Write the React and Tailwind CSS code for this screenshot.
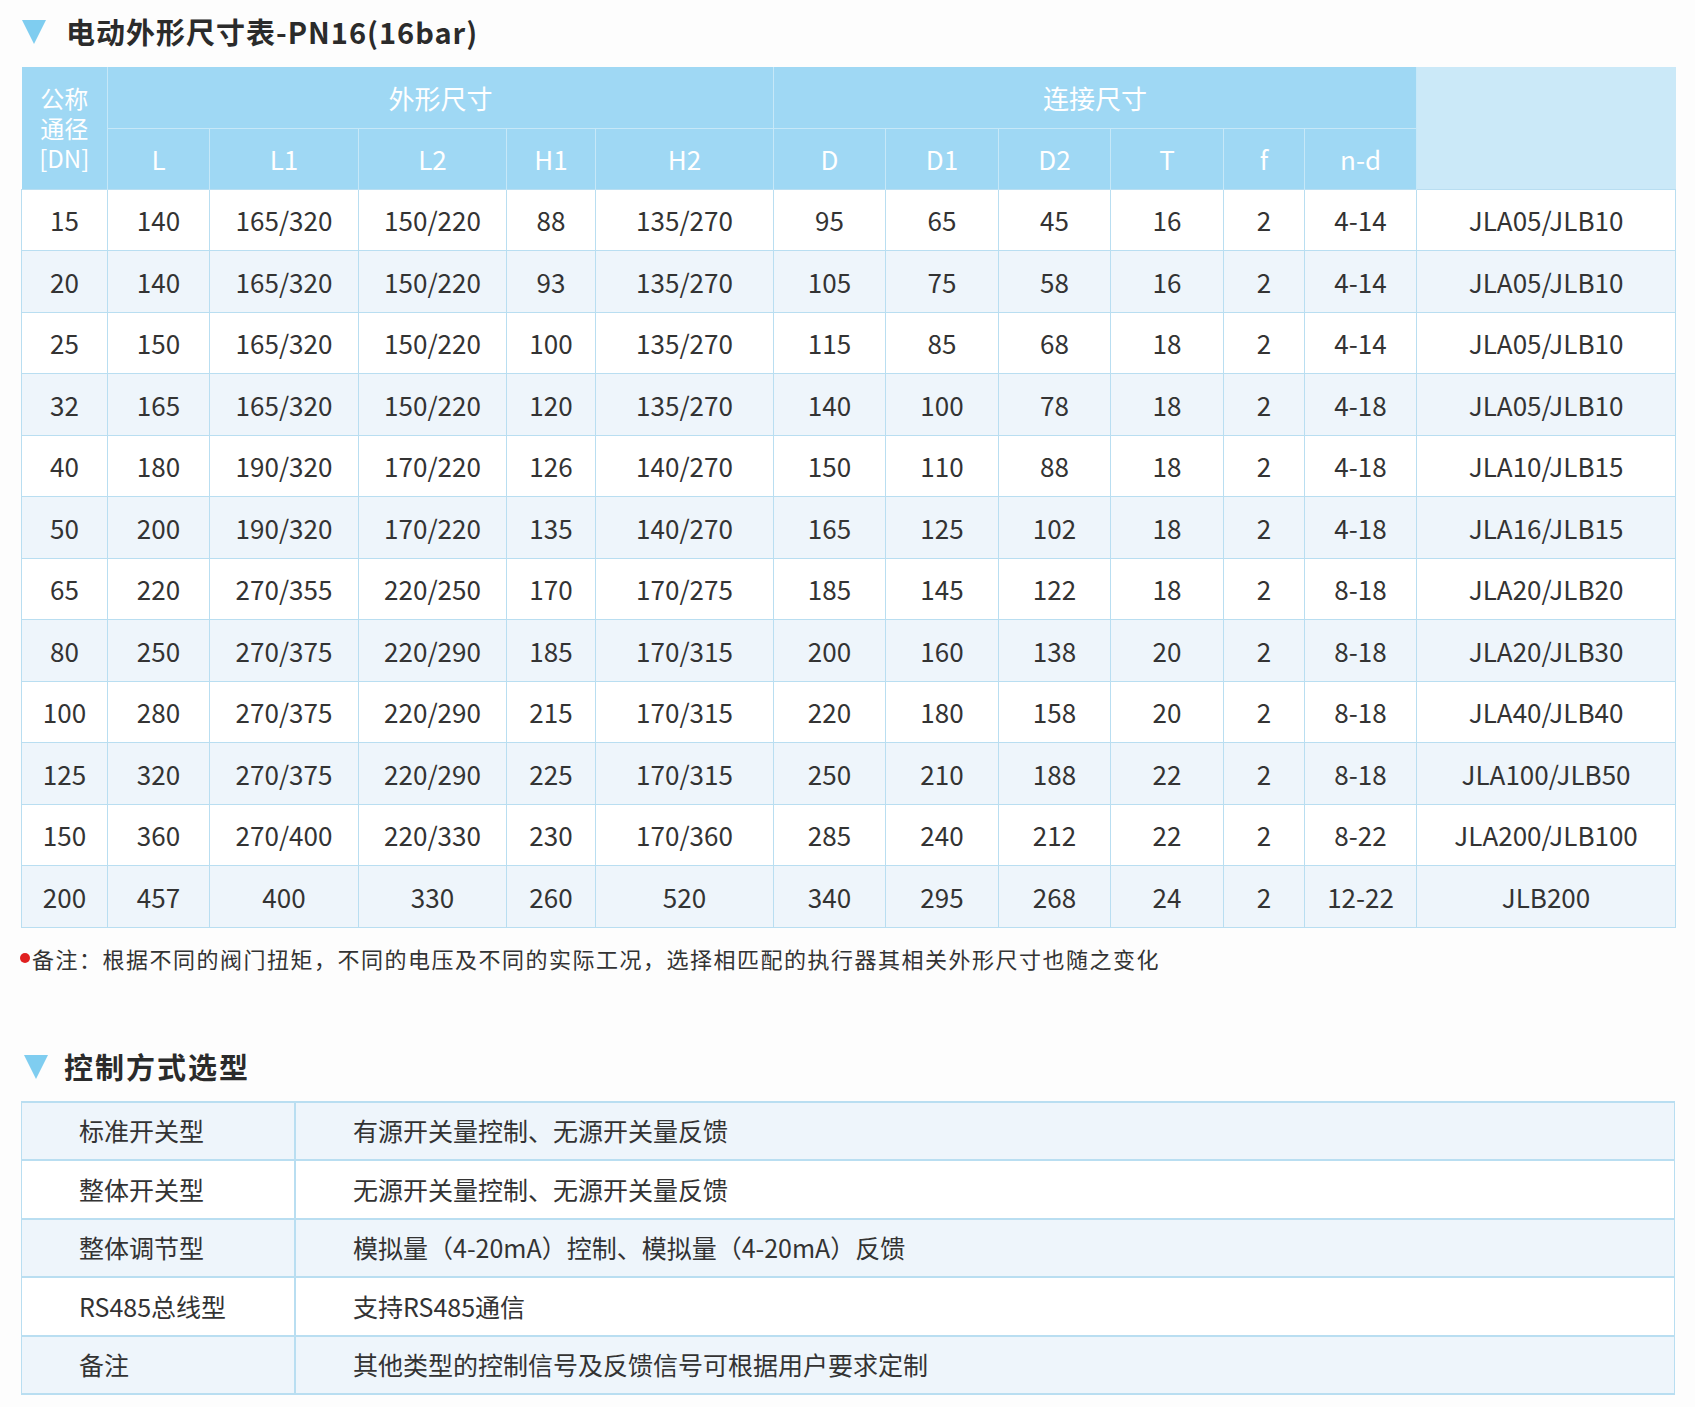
import React from "react";

const rows = [
  ["15","140","165/320","150/220","88","135/270","95","65","45","16","2","4-14","JLA05/JLB10"],
  ["20","140","165/320","150/220","93","135/270","105","75","58","16","2","4-14","JLA05/JLB10"],
  ["25","150","165/320","150/220","100","135/270","115","85","68","18","2","4-14","JLA05/JLB10"],
  ["32","165","165/320","150/220","120","135/270","140","100","78","18","2","4-18","JLA05/JLB10"],
  ["40","180","190/320","170/220","126","140/270","150","110","88","18","2","4-18","JLA10/JLB15"],
  ["50","200","190/320","170/220","135","140/270","165","125","102","18","2","4-18","JLA16/JLB15"],
  ["65","220","270/355","220/250","170","170/275","185","145","122","18","2","8-18","JLA20/JLB20"],
  ["80","250","270/375","220/290","185","170/315","200","160","138","20","2","8-18","JLA20/JLB30"],
  ["100","280","270/375","220/290","215","170/315","220","180","158","20","2","8-18","JLA40/JLB40"],
  ["125","320","270/375","220/290","225","170/315","250","210","188","22","2","8-18","JLA100/JLB50"],
  ["150","360","270/400","220/330","230","170/360","285","240","212","22","2","8-22","JLA200/JLB100"],
  ["200","457","400","330","260","520","340","295","268","24","2","12-22","JLB200"],
];
const widths = [86,102,149,148,89,178,112,113,112,113,81,112,259];
const ctrl = [
  ["标准开关型","有源开关量控制、无源开关量反馈"],
  ["整体开关型","无源开关量控制、无源开关量反馈"],
  ["整体调节型","模拟量（4-20mA）控制、模拟量（4-20mA）反馈"],
  ["RS485总线型","支持RS485通信"],
  ["备注","其他类型的控制信号及反馈信号可根据用户要求定制"],
];
const font = { fontFamily: '"Noto Sans CJK SC", "Noto Sans", sans-serif' };

function Tri() {
  return <div className="w-0 h-0 border-l-[12px] border-r-[12px] border-t-[24px] border-l-transparent border-r-transparent border-t-[#7fcdf0]" />;
}

export default function App() {
  return (
    <div className="w-[1695px] h-[1407px] bg-[#fdfdfd] text-[#333]" style={font}>
      <div className="flex items-center gap-[20px] pl-[22px] pt-[12px] h-[52px]">
        <Tri />
        <div className="text-[29px] font-bold tracking-[1px] text-[#2b2b2b]">电动外形尺寸表-PN16(16bar)</div>
      </div>
      <div className="ml-[21px] mt-[15px] w-[1654px]">
        <table className="border-collapse table-fixed w-[1654px] text-[26px]">
          <colgroup>{widths.map((w, i) => <col key={i} style={{ width: w }} />)}</colgroup>
          <thead className="bg-[#9fd8f4] text-white font-light">
            <tr className="h-[61px]">
              <th rowSpan={2} className="font-normal text-[24px] leading-[30px] border-r border-[#c6e8f8]">公称<br/>通径<br/>[DN]</th>
              <th colSpan={5} className="font-normal border-r border-b border-[#c6e8f8]">外形尺寸</th>
              <th colSpan={6} className="font-normal border-r border-b border-[#c6e8f8]">连接尺寸</th>
              <th rowSpan={2} className="bg-[#cbe9f8]"></th>
            </tr>
            <tr className="h-[61px]">
              {["L","L1","L2","H1","H2","D","D1","D2","T","f","n-d"].map((h) => (
                <th key={h} className="font-normal border-r border-[#c6e8f8]">{h}</th>
              ))}
            </tr>
          </thead>
          <tbody>
            {rows.map((r, i) => (
              <tr key={i} className={`h-[61.5px] ${i % 2 ? "bg-[#eef5fb]" : "bg-white"}`}>
                {r.map((c, j) => (
                  <td key={j} className="text-center border border-[#b9def1] text-[#333]">{c}</td>
                ))}
              </tr>
            ))}
          </tbody>
        </table>
      </div>
      <div className="flex items-center pl-[20px] mt-[14px] text-[22px] tracking-[1.5px] text-[#333]">
        <span className="w-[10px] h-[10px] rounded-full bg-[#e02020] mr-[2px]" />
        备注：根据不同的阀门扭矩，不同的电压及不同的实际工况，选择相匹配的执行器其相关外形尺寸也随之变化
      </div>
      <div className="flex items-center gap-[16px] pl-[24px] mt-[72px] h-[40px]">
        <Tri />
        <div className="text-[29px] font-bold tracking-[2px] text-[#2b2b2b]">控制方式选型</div>
      </div>
      <div className="ml-[21px] mt-[14px] w-[1654px] border-t-2 border-[#b9def1]">
        {ctrl.map(([a, b], i) => (
          <div key={i} className={`flex h-[58.5px] border-b-2 border-x border-[#b9def1] items-center text-[25px] ${i % 2 ? "bg-white" : "bg-[#eef5fb]"}`}>
            <div className="w-[274px] h-full flex items-center pl-[57px] border-r-2 border-[#b9def1]">{a}</div>
            <div className="pl-[57px]">{b}</div>
          </div>
        ))}
      </div>
    </div>
  );
}
